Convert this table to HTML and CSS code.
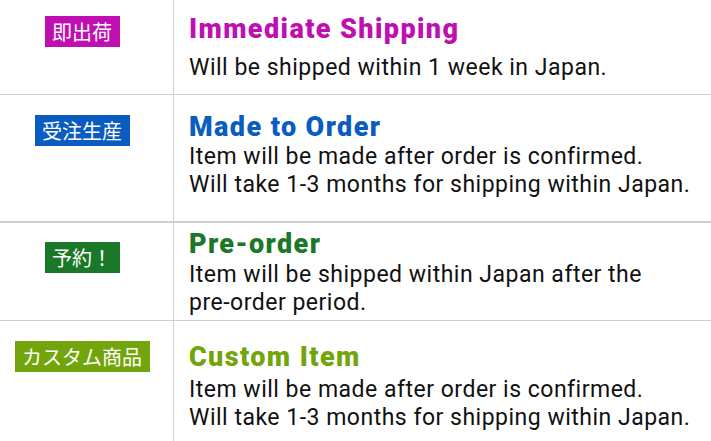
FILE: index.html
```html
<!DOCTYPE html>
<html lang="en">
<head>
<meta charset="utf-8">
<title>Shipping types</title>
<link rel="stylesheet" href="styles.css">
</head>
<body>
<div class="table">
  <div class="row row-immediate">
    <div class="cell-badge"><span class="badge badge-magenta">即出荷</span></div>
    <div class="cell-text">
      <h2 class="title title-magenta">Immediate Shipping</h2>
      <p class="desc">Will be shipped within 1 week in Japan.</p>
    </div>
  </div>
  <div class="row row-made">
    <div class="cell-badge"><span class="badge badge-blue">受注生産</span></div>
    <div class="cell-text">
      <h2 class="title title-blue">Made to Order</h2>
      <p class="desc">Item will be made after order is confirmed.<br>Will take 1-3 months for shipping within Japan.</p>
    </div>
  </div>
  <div class="row row-pre">
    <div class="cell-badge"><span class="badge badge-green">予約！</span></div>
    <div class="cell-text">
      <h2 class="title title-green">Pre-order</h2>
      <p class="desc">Item will be shipped within Japan after the<br>pre-order period.</p>
    </div>
  </div>
  <div class="row row-custom">
    <div class="cell-badge"><span class="badge badge-lime">カスタム商品</span></div>
    <div class="cell-text">
      <h2 class="title title-lime">Custom Item</h2>
      <p class="desc">Item will be made after order is confirmed.<br>Will take 1-3 months for shipping within Japan.</p>
    </div>
  </div>
</div>
</body>
</html>
```

FILE: styles.css
```css
html, body {
  margin: 0;
  padding: 0;
  background: #ffffff;
}

body {
  font-family: Roboto, "Noto Sans CJK JP", sans-serif;
  color: #111111;
  width: 711px;
  height: 441px;
  overflow: hidden;
}

.table {
  display: flex;
  flex-direction: column;
}

.row {
  display: grid;
  grid-template-columns: 174px 1fr;
  box-sizing: border-box;
  border-bottom: 1px solid #cfcfcf;
}

.cell-badge {
  box-sizing: border-box;
  border-right: 1px solid #cfcfcf;
  display: flex;
  justify-content: center;
  align-items: flex-start;
  padding-right: 9px;
}

.cell-text {
  padding-left: 15px;
}

.badge {
  display: inline-block;
  height: 31px;
  line-height: 31px;
  padding: 0 7.5px;
  font-family: "Noto Sans CJK JP", sans-serif;
  font-size: 20px;
  color: #ffffff;
  white-space: nowrap;
}

.badge-magenta { background: #c00fb1; }
.badge-blue { background: #0a5cc0; }
.badge-green { background: #1b7829; }
.badge-lime { background: #72a50b; }

.title {
  margin: 0;
  font-family: Roboto, sans-serif;
  font-weight: 900;
  font-size: 27px;
  line-height: 32px;
  letter-spacing: 1.4px;
}

.title-magenta { color: #c00fb1; }
.title-blue { color: #0a5cc0; }
.title-green { color: #1b7829; }
.title-lime { color: #72a50b; }

.desc {
  margin: 0;
  font-family: Roboto, sans-serif;
  font-size: 23px;
  line-height: 28px;
  letter-spacing: 0.5px;
  color: #111111;
}

/* per-row vertical rhythm */
.row-immediate { height: 95px; }
.row-immediate .cell-badge { padding-top: 16px; }
.row-immediate .cell-text { padding-top: 13px; }
.row-immediate .desc { margin-top: 9px; }

.row-made { height: 128px; border-bottom-width: 2px; }
.row-made .cell-badge { padding-top: 20px; }
.row-made .cell-text { padding-top: 16px; }
.row-made .desc { margin-top: 0; }

.row-pre { height: 98px; }
.row-pre .cell-badge { padding-top: 19px; }
.row-pre .cell-text { padding-top: 5px; }
.row-pre .desc { margin-top: 1px; }

.row-custom { height: 120px; border-bottom: none; }
.row-custom .cell-badge { padding-top: 20px; }
.row-custom .cell-text { padding-top: 20px; }
.row-custom .desc { margin-top: 3px; }
```
